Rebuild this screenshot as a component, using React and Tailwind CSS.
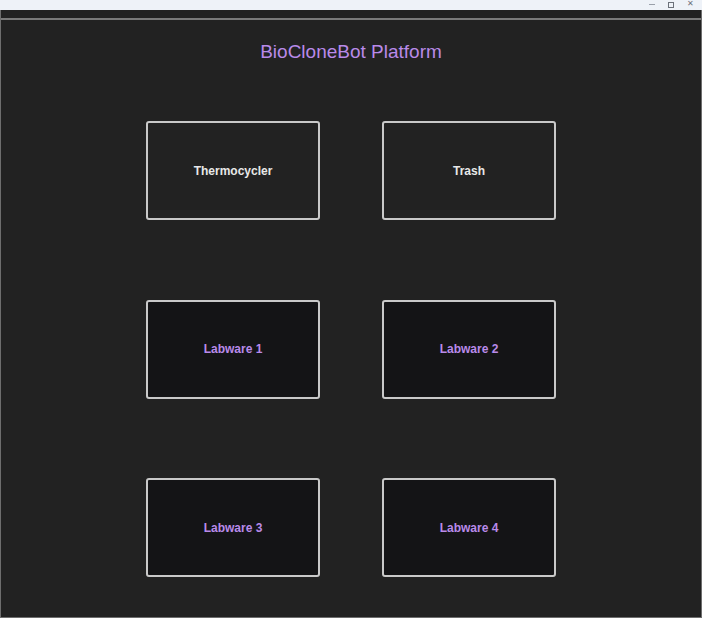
const CELLS = [
  { label: "Thermocycler", kind: "station" },
  { label: "Trash", kind: "station" },
  { label: "Labware 1", kind: "labware" },
  { label: "Labware 2", kind: "labware" },
  { label: "Labware 3", kind: "labware" },
  { label: "Labware 4", kind: "labware" },
];

function Slot({ label, kind }) {
  const isLabware = kind === "labware";
  return (
    <div
      className={
        isLabware
          ? "h-[99px] flex items-center justify-center rounded-[3px] border-2 border-[#c9c9c9] bg-[#141416] text-[12px] font-bold text-[#b98ae9]"
          : "h-[99px] flex items-center justify-center rounded-[3px] border-2 border-[#c9c9c9] bg-[#222222] text-[12px] font-bold text-[#e8e8e8]"
      }
    >
      {label}
    </div>
  );
}

export default function App() {
  return (
    <div
      className="w-[702px] h-[618px] flex flex-col bg-[#222222] overflow-hidden"
      style={{ fontFamily: '"Liberation Sans", Arial, sans-serif' }}
    >
      {/* window chrome, cut off at the top */}
      <div className="h-[10px] bg-[#eef2f8] flex items-start justify-end pr-[8px] gap-[13px] text-[#8a8f99] leading-none">
        <span className="w-[6px] h-[1px] bg-[#9aa0aa] mt-[4px]" />
        <span className="w-[6px] h-[6px] border border-[#6c717a] mt-[2px]" />
        <span className="text-[8px] mt-[0px] text-[#6c717a]">✕</span>
      </div>

      <div className="flex-1 flex flex-col border-x border-b border-[#6e6e6e]">
        <div className="h-[10px] border-b-2 border-[#7a7a7a]" />

        <div className="flex-1 flex flex-col items-center">
          <h1 className="mt-[21px] text-[19px] leading-[22px] text-[#b98ae9]">
            BioCloneBot Platform
          </h1>

          <div className="mt-[58px] grid grid-cols-[174px_174px] gap-x-[62px] gap-y-[79.5px]">
            {CELLS.map((c) => (
              <Slot key={c.label} label={c.label} kind={c.kind} />
            ))}
          </div>
        </div>
      </div>
    </div>
  );
}
